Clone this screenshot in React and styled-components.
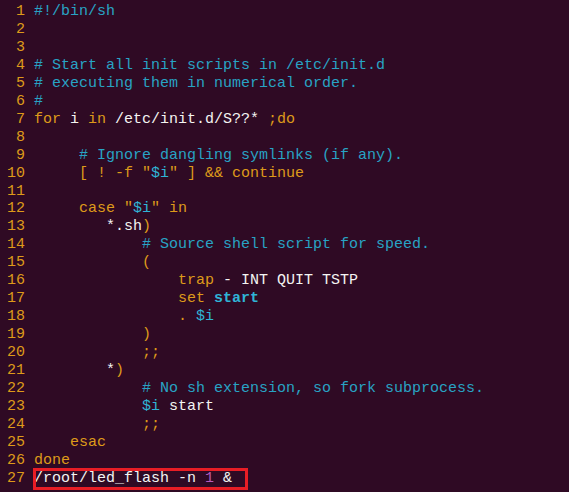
import React from "react";
import styled, { createGlobalStyle } from "styled-components";

const GlobalStyle = createGlobalStyle`
  html, body {
    margin: 0;
    padding: 0;
    background: #2f0a24;
  }
`;

const colors = {
  kw: "#de9a1a",
  cm: "#28a3c4",
  id: "#2fb4d6",
  tx: "#f4f4f2",
  num: "#b75cbc",
};

const Editor = styled.div`
  width: 569px;
  height: 492px;
  overflow: hidden;
  background: #2f0a24;
  padding-top: 3px;
  box-sizing: border-box;
  font-family: "Liberation Mono", "DejaVu Sans Mono", monospace;
  font-size: 15px;
  line-height: 17.96px;
`;

const Line = styled.div`
  display: grid;
  grid-template-columns: 25px 1fr;
  column-gap: 9px;
  height: 17.96px;
  white-space: pre;
`;

const LineNo = styled.span`
  color: ${colors.kw};
  text-align: right;
`;

const Code = styled.span`
  color: ${colors.tx};
`;

const Tok = styled.span`
  color: ${(p) => colors[p.$t] || colors.tx};
  font-weight: ${(p) => (p.$bold ? 700 : 400)};
`;

const Marked = styled.span`
  position: relative;

  &::after {
    content: "";
    position: absolute;
    left: -1px;
    right: -16px;
    top: -2px;
    bottom: -3px;
    border: 3px solid #e81d25;
  }
`;

// each line: list of [text, tone, bold?]
const source = [
  [["#!/bin/sh", "cm"]],
  [],
  [],
  [["# Start all init scripts in /etc/init.d", "cm"]],
  [["# executing them in numerical order.", "cm"]],
  [["#", "cm"]],
  [["for", "kw"], [" i ", "tx"], ["in", "kw"], [" /etc/init.d/S??* ", "tx"], [";do", "kw"]],
  [],
  [["     # Ignore dangling symlinks (if any).", "cm"]],
  [["     [ ! -f \"", "kw"], ["$i", "id"], ["\" ] && continue", "kw"]],
  [],
  [["     case \"", "kw"], ["$i", "id"], ["\" in", "kw"]],
  [["        *.sh", "tx"], [")", "kw"]],
  [["            # Source shell script for speed.", "cm"]],
  [["            (", "kw"]],
  [["                trap", "kw"], [" - INT QUIT TSTP", "tx"]],
  [["                set", "kw"], [" ", "tx"], ["start", "id", true]],
  [["                .", "kw"], [" ", "tx"], ["$i", "id"]],
  [["            )", "kw"]],
  [["            ;;", "kw"]],
  [["        *", "tx"], [")", "kw"]],
  [["            # No sh extension, so fork subprocess.", "cm"]],
  [["            ", "tx"], ["$i", "id"], [" start", "tx"]],
  [["            ;;", "kw"]],
  [["    esac", "kw"]],
  [["done", "kw"]],
];

const App = () => (
  <>
    <GlobalStyle />
    <Editor>
      {source.map((toks, i) => (
        <Line key={i}>
          <LineNo>{i + 1}</LineNo>
          <Code>
            {toks.map(([text, t, bold], j) => (
              <Tok key={j} $t={t} $bold={bold}>
                {text}
              </Tok>
            ))}
          </Code>
        </Line>
      ))}
      <Line>
        <LineNo>27</LineNo>
        <Code>
          <Marked>
            <Tok $t="tx">/root/led_flash -n </Tok>
            <Tok $t="num">1</Tok>
            <Tok $t="tx"> &amp;</Tok>
          </Marked>
        </Code>
      </Line>
    </Editor>
  </>
);

export default App;
